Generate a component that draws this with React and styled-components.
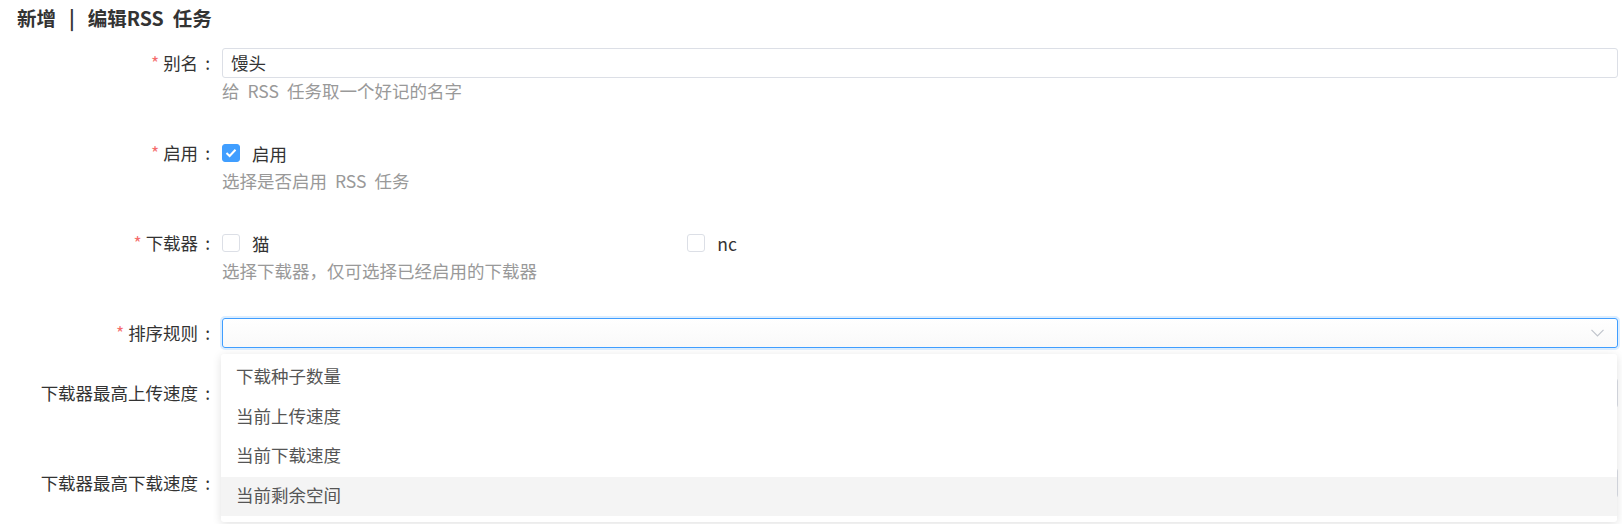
import React from 'react';
import styled, { createGlobalStyle } from 'styled-components';

const GlobalStyle = createGlobalStyle`
    body {
        margin: 0;
        background: #fff;
        font-family: "Noto Sans CJK SC", "Noto Sans", sans-serif;
        color: #333;
    }
`;

const Page = styled.div`
    padding: 0 4px 0 0;
    height: 524px;
    overflow: hidden;
`;

const Title = styled.h2`
    margin: 0;
    padding-left: 17px;
    font-size: 19.5px;
    font-weight: 700;
    line-height: 35px;
    color: #333;
`;

const Bar = styled.span`
    margin: 0 13px;
`;

const Spaced = styled.span`
    margin-left: ${props => props.$gap}px;
`;

const Form = styled.div`
    margin-top: 13px;
`;

const Item = styled.div`
    display: grid;
    grid-template-columns: 222px 1fr;
    margin-bottom: 30px;
`;

const Label = styled.label`
    box-sizing: border-box;
    padding-right: 12px;
    text-align: right;
    font-size: 17.5px;
    line-height: 30px;
    color: #333;
    white-space: nowrap;

    &::before {
        content: ${props => props.$required ? '"*"' : 'none'};
        color: #f56c6c;
        margin-right: 4px;
    }

    &::after {
        content: ":";
        margin-left: 7px;
    }
`;

const Content = styled.div`
    position: relative;
    min-width: 0;
`;

const Help = styled.div`
    font-size: 17.5px;
    line-height: 26px;
    height: 26px;
    margin-bottom: 4px;
    color: #999;
`;

const Input = styled.div`
    box-sizing: border-box;
    height: 30px;
    border: 1px solid ${props => props.$focus ? '#409eff' : '#dcdfe6'};
    border-radius: 3px;
    padding: 0 8px;
    font-size: 17.5px;
    line-height: 28px;
    color: #333;
    background: ${props => props.$focus ? 'linear-gradient(#fff, #f9f9f9)' : '#fff'};
    box-shadow: ${props => props.$focus ? '0 0 0 2px rgba(64, 158, 255, 0.18)' : 'none'};
    display: flex;
    align-items: center;
    justify-content: space-between;
`;

const Group = styled.div`
    display: grid;
    grid-template-columns: repeat(3, 1fr);
    height: 30px;
`;

const Check = styled.div`
    display: flex;
    align-items: center;
    gap: 12px;
    font-size: 17.5px;
    color: #333;
`;

const Box = styled.span`
    box-sizing: border-box;
    width: 18px;
    height: 18px;
    border-radius: 3px;
    border: 1px solid ${props => props.$checked ? '#409eff' : '#dcdfe6'};
    background: ${props => props.$checked ? '#409eff' : '#fff'};
    display: flex;
    align-items: center;
    justify-content: center;
`;

const Dropdown = styled.ul`
    position: absolute;
    top: 36px;
    left: -1px;
    right: 1px;
    margin: 0;
    padding: 4px 0 6px;
    list-style: none;
    background: #fff;
    border-radius: 3px;
    box-shadow: 0 2px 10px rgba(0, 0, 0, 0.12);
    z-index: 10;
`;

const Option = styled.li`
    box-sizing: border-box;
    height: 39.5px;
    line-height: 36px;
    padding: 0 15px 3.5px;
    font-size: 17.5px;
    color: #555;
    background: ${props => props.$hover ? '#f4f4f4' : 'transparent'};
`;

function CheckBox({ checked, label }) {
    return (
        <Check>
            <Box $checked={checked}>
                {checked && (
                    <svg width="12" height="10" viewBox="0 0 12 10">
                        <polyline points="1.5,5 4.6,8 10.5,1.8" fill="none" stroke="#fff" strokeWidth="2" />
                    </svg>
                )}
            </Box>
            {label}
        </Check>
    );
}

const sortRules = ['下载种子数量', '当前上传速度', '当前下载速度', '当前剩余空间'];

function App() {
    return (
        <Page>
            <GlobalStyle />
            <Title>新增<Bar>|</Bar>编辑RSS<Spaced $gap={9}>任务</Spaced></Title>
            <Form>
                <Item>
                    <Label $required>别名</Label>
                    <Content>
                        <Input>馒头</Input>
                        <Help>给<Spaced $gap={8}>RSS</Spaced><Spaced $gap={8}>任务取一个好记的名字</Spaced></Help>
                    </Content>
                </Item>
                <Item>
                    <Label $required>启用</Label>
                    <Content>
                        <Group>
                            <CheckBox checked label="启用" />
                        </Group>
                        <Help>选择是否启用<Spaced $gap={8}>RSS</Spaced><Spaced $gap={8}>任务</Spaced></Help>
                    </Content>
                </Item>
                <Item>
                    <Label $required>下载器</Label>
                    <Content>
                        <Group>
                            <CheckBox label="猫" />
                            <CheckBox label="nc" />
                        </Group>
                        <Help>选择下载器，仅可选择已经启用的下载器</Help>
                    </Content>
                </Item>
                <Item>
                    <Label $required>排序规则</Label>
                    <Content>
                        <Input $focus>
                            <span />
                            <svg width="13" height="8" viewBox="0 0 13 8" style={{ marginRight: 5 }}>
                                <polyline points="0.5,0.8 6.5,7 12.5,0.8" fill="none" stroke="#c0c4cc" strokeWidth="1.2" />
                            </svg>
                        </Input>
                        <Dropdown>
                            {sortRules.map((rule, key) => (
                                <Option key={key} $hover={key === sortRules.length - 1}>{rule}</Option>
                            ))}
                        </Dropdown>
                    </Content>
                </Item>
                <Item>
                    <Label>下载器最高上传速度</Label>
                    <Content>
                        <Input />
                        <Help />
                    </Content>
                </Item>
                <Item>
                    <Label>下载器最高下载速度</Label>
                    <Content>
                        <Input />
                        <Help />
                    </Content>
                </Item>
            </Form>
        </Page>
    );
}

export default App;
